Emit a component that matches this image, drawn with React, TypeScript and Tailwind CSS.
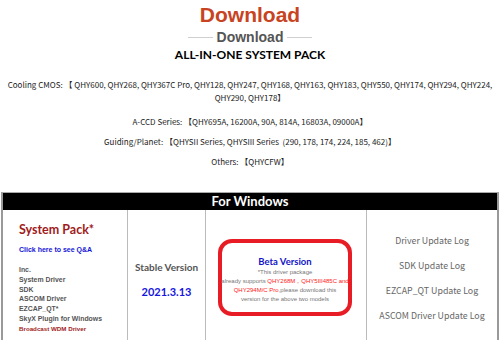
import React from 'react';

const cjk = "font-['Noto_Sans_CJK_SC','Noto_Sans',sans-serif]";
const lato = "font-['Lato','Noto_Sans',sans-serif]";
const arial = "font-['Liberation_Sans',Arial,sans-serif]";

const logs = ['Driver Update Log', 'SDK Update Log', 'EZCAP_QT Update Log', 'ASCOM Driver Update Log'];
const includes = ['Inc.', 'System Driver', 'SDK', 'ASCOM Driver', 'EZCAP_QT*', 'SkyX Plugin for Windows'];

export default function App() {
  return (
    <div className="w-[500px] h-[340px] overflow-hidden bg-white">
      {/* Heading */}
      <div className="flex flex-col items-center pt-[3px]">
        <h1 className={`${arial} text-[21px] leading-[24px] font-bold text-[#c8431f]`}>Download</h1>
        <div className="flex items-center gap-[4px] mt-[1px]">
          <span className="h-px w-[25px] bg-[#cfcfcf]" />
          <span className={`${arial} text-[14px] leading-[18px] font-bold text-[#555]`}>Download</span>
          <span className="h-px w-[25px] bg-[#cfcfcf]" />
        </div>
        <h2 className={`${lato} text-[12px] leading-[18px] font-bold text-black`}>ALL-IN-ONE SYSTEM PACK</h2>
      </div>

      {/* Supported cameras */}
      <div className={`${cjk} text-[8px] leading-[13px] text-[#222] text-center px-[4px] mt-[14px]`}>
        <p>Cooling CMOS: 【 QHY600, QHY268, QHY367C Pro, QHY128, QHY247, QHY168, QHY163, QHY183, QHY550, QHY174, QHY294, QHY224, QHY290, QHY178】</p>
        <p className="mt-[11px]">A-CCD Series: 【QHY695A, 16200A, 90A, 814A, 16803A, 09000A】</p>
        <p className="mt-[7px]">Guiding/Planet: 【QHYSII Series, QHYSIII Series&nbsp; (290, 178, 174, 224, 185, 462)】</p>
        <p className="mt-[7px]">Others: 【QHYCFW】</p>
      </div>

      {/* Windows table */}
      <div className="mx-[1px] mt-[24px] border-2 border-b-0 border-[#999] border-t-[#aaa] border-t">
        <div className={`${lato} bg-black text-white text-[13px] font-bold text-center leading-[17px] h-[17px]`}>For Windows</div>
        <div className="grid grid-cols-[125px_78px_161px_1fr] h-[200px]">
          <div className="pl-[16px] pt-[11px] border-r border-[#bbb]">
            <div className={`${lato} text-[#a01b1b] text-[12.5px] font-bold leading-[17px]`}>System Pack*</div>
            <div className={`${arial} text-[#1515d8] text-[7px] font-bold leading-[10px] mt-[7px]`}>Click here to see Q&amp;A</div>
            <div className={`${arial} text-[#555] text-[6.9px] font-bold leading-[9.8px] mt-[10px]`}>
              {includes.map((t) => (
                <div key={t}>{t}</div>
              ))}
              <div className="text-[#a01b1b] text-[6.2px]">Broadcast WDM Driver</div>
            </div>
          </div>
          <div className={`${lato} flex flex-col items-center pt-[50px] border-r border-[#bbb] whitespace-nowrap`}>
            <div className="text-[#555] text-[10px] font-bold leading-[14px]">Stable Version</div>
            <div className="text-[#1515e0] text-[11px] font-bold leading-[14px] mt-[11px]">2021.3.13</div>
          </div>
          <div className="pl-[12px] pr-[14px] pt-[29px] border-r border-[#bbb]">
            <div className={`${arial} border-[4px] border-[#e81c24] rounded-[14px] h-[77px] flex flex-col items-center pt-[12px] text-[6px] leading-[9px] text-[#777] text-center whitespace-nowrap`}>
              <div className={`${lato} text-[#1414c8] text-[9.5px] font-bold leading-[13px]`}>Beta Version</div>
              <div>*This driver package</div>
              <div>
                already supports <span className="text-[#ff2020]">QHY268M，QHY5III485C and</span>
              </div>
              <div>
                <span className="text-[#ff2020]">QHY294M/C Pro</span>,please download this
              </div>
              <div>version for the above two models</div>
            </div>
          </div>
          <div className={`${cjk} flex flex-col items-center pt-[24px] gap-[12px] text-[8.8px] leading-[13px] text-[#666] whitespace-nowrap`}>
            {logs.map((t) => (
              <div key={t}>{t}</div>
            ))}
          </div>
        </div>
      </div>
    </div>
  );
}
